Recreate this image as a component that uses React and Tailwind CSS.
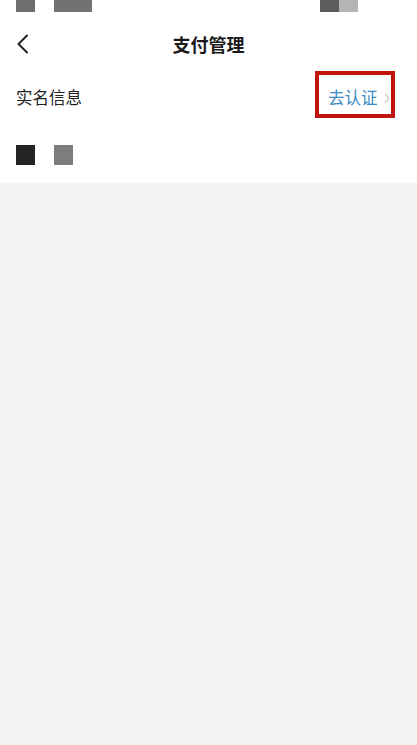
export default function App() {
  return (
    <div
      className="min-h-[745px] bg-[#f4f4f4]"
      style={{ fontFamily: '"Noto Sans CJK SC", "Noto Sans", sans-serif' }}
    >
      <div className="bg-white">
        {/* status bar, blurred */}
        <div className="flex h-[13px] items-start justify-between px-4">
          <div className="flex gap-[19px]">
            <div className="h-[12px] w-[19px] bg-[#6e6e6e]" />
            <div className="h-[12px] w-[38px] bg-[#727272]" />
          </div>
          <div className="mr-[43px] flex">
            <div className="h-[12px] w-[19px] bg-[#5c5c5c]" />
            <div className="h-[12px] w-[19px] bg-[#b4b4b4]" />
          </div>
        </div>

        {/* nav bar */}
        <div className="relative flex h-[50px] items-center px-4">
          <svg width="13" height="20" viewBox="0 0 13 20" fill="none" className="mt-[12px]">
            <path d="M11 1.5 2.5 10 11 18.5" stroke="#222" strokeWidth="2" strokeLinecap="round" strokeLinejoin="round" />
          </svg>
          <div className="absolute inset-x-0 top-[16px] text-center text-[18px] font-bold leading-[30px] text-[#1a1a1a]">
            支付管理
          </div>
        </div>

        {/* real name row */}
        <div className="flex h-[62px] items-center justify-between pl-4 pr-[22px]">
          <span className="mt-[6px] text-[16.5px] text-[#222]">实名信息</span>
          <div className="flex h-[47px] w-[80px] items-center border-4 border-[#c0150f] pl-[9px] pt-[6px]">
            <span className="text-[16.5px] text-[#3d8bc4]">去认证</span>
            <svg width="6" height="11" viewBox="0 0 6 11" fill="none" className="ml-[6px] mt-[2px]">
              <path d="M1 1l4 4.5L1 10" stroke="#c8c8c8" strokeWidth="1.2" />
            </svg>
          </div>
        </div>

        {/* blurred items */}
        <div className="flex h-[58px] items-start gap-[19px] px-4 pt-[20px]">
          <div className="h-[20px] w-[19px] bg-[#242424]" />
          <div className="h-[20px] w-[19px] bg-[#7d7d7d]" />
        </div>
      </div>
    </div>
  );
}
